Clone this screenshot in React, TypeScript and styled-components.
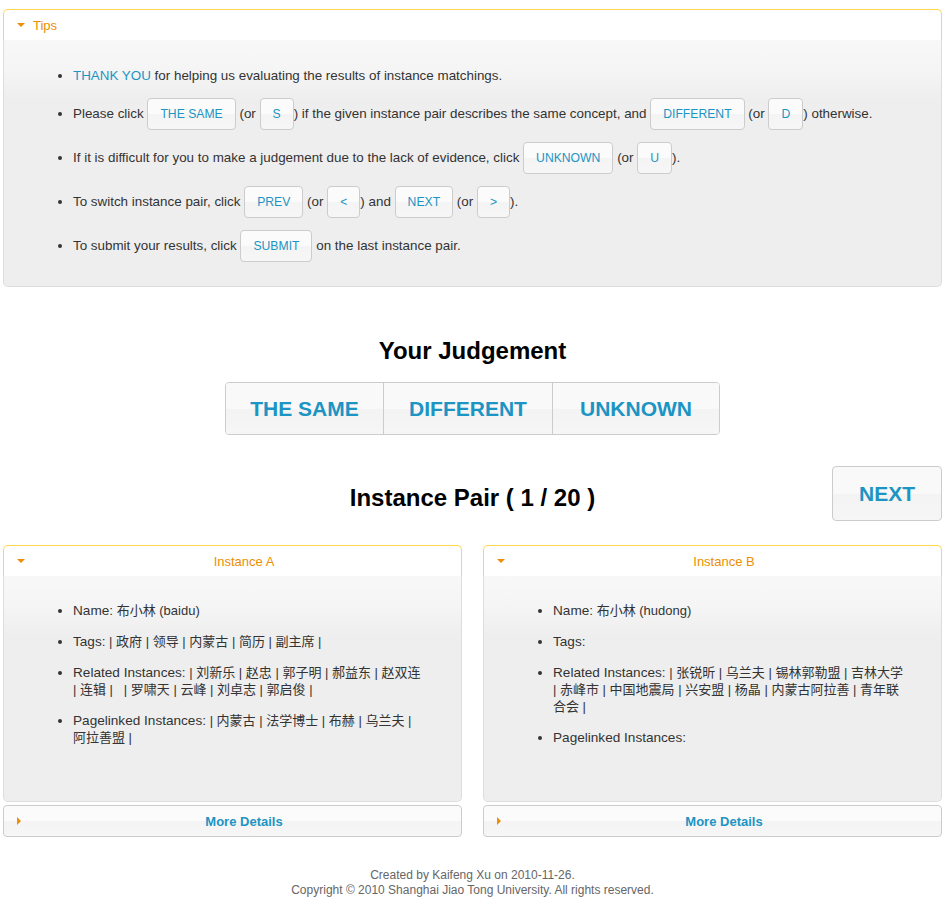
import React from 'react'
import styled, { createGlobalStyle } from 'styled-components'

const GlobalStyle = createGlobalStyle`
  body {
    margin: 0;
    background: #ffffff;
    font-family: "Trebuchet MS", "Liberation Sans", "Noto Sans CJK SC", sans-serif;
    font-size: 13px;
    color: #333333;
  }
`

const Page = styled.div`
  padding: 9px 2px 0 3px;
`

const Panel = styled.div`
  display: flex;
  flex-direction: column;
`

const PanelHeader = styled.div<{ $center?: boolean }>`
  position: relative;
  height: 30px;
  display: flex;
  align-items: center;
  justify-content: ${(p) => (p.$center ? 'center' : 'flex-start')};
  padding-left: ${(p) => (p.$center ? '23px' : '29px')};
  background: #ffffff;
  border: 1px solid #fbd850;
  border-bottom: none;
  border-radius: 5px 5px 0 0;
  color: #eb8f00;
  font-size: 13px;
`

const Arrow = styled.span<{ $dir: 'down' | 'right' }>`
  position: absolute;
  left: 13px;
  top: 50%;
  width: 0;
  height: 0;
  ${(p) =>
    p.$dir === 'down'
      ? `
    margin-top: -2px;
    border-left: 4px solid transparent;
    border-right: 4px solid transparent;
    border-top: 4px solid #ef8c08;
  `
      : `
    margin-top: -4px;
    border-top: 4px solid transparent;
    border-bottom: 4px solid transparent;
    border-left: 4px solid #ef8c08;
  `}
`

const PanelBody = styled.div`
  background: linear-gradient(#f8f8f8 0px, #f5f5f5 30px, #eeeeee 60px, #eeeeee 100%);
  border: 1px solid #dddddd;
  border-top: none;
  border-radius: 0 0 5px 5px;
`

const TipList = styled.ul`
  margin: 0;
  padding: 26px 0 24px 69px;
  list-style: disc;
  line-height: 20px;
  font-size: 13.4px;
  li {
    margin-bottom: 12px;
  }
  li:last-child {
    margin-bottom: 0;
  }
`

const Highlight = styled.span`
  color: #1c94c4;
`

const SmallBtn = styled.span`
  display: inline-flex;
  align-items: center;
  justify-content: center;
  vertical-align: middle;
  box-sizing: border-box;
  height: 32px;
  padding: 0 12px;
  background: linear-gradient(#fbfbfb 0%, #fbfbfb 50%, #f4f4f4 51%, #f6f6f6 100%);
  border: 1px solid #cccccc;
  border-radius: 4px;
  color: #1c94c4;
  font-size: 12.2px;
`

const Heading = styled.h2<{ $shift?: number }>`
  margin: ${(p) => p.$shift || 0}px 0 0;
  font-family: "Liberation Sans", Arial, sans-serif;
  font-weight: bold;
  font-size: 24px;
  line-height: 28px;
  color: #000000;
  text-align: center;
`

const JudgeSection = styled.div`
  margin-top: 50px;
  display: flex;
  flex-direction: column;
  align-items: center;
  gap: 17px;
`

const ButtonSet = styled.div`
  display: flex;
  border: 1px solid #cccccc;
  border-radius: 4px;
  overflow: hidden;
`

const BigBtn = styled.div<{ $w: number }>`
  width: ${(p) => p.$w}px;
  height: 51px;
  display: flex;
  align-items: center;
  justify-content: center;
  background: linear-gradient(#f9f9f9 0%, #f9f9f9 50%, #f3f3f3 51%, #f6f6f6 100%);
  color: #1c94c4;
  font-size: 21px;
  font-weight: bold;
  & + & {
    border-left: 1px solid #cccccc;
  }
`

const PairRow = styled.div`
  margin-top: 31px;
  display: grid;
  grid-template-columns: 1fr auto 1fr;
  align-items: center;
`

const NextBtn = styled.div`
  justify-self: end;
  box-sizing: border-box;
  width: 110px;
  height: 55px;
  display: flex;
  align-items: center;
  justify-content: center;
  background: linear-gradient(#f9f9f9 0%, #f9f9f9 50%, #f3f3f3 51%, #f6f6f6 100%);
  border: 1px solid #cccccc;
  border-radius: 4px;
  color: #1c94c4;
  font-size: 21px;
  font-weight: bold;
`

const Columns = styled.div`
  margin-top: 24px;
  display: grid;
  grid-template-columns: 1fr 1fr;
  column-gap: 21px;
`

const InstanceCol = styled.div`
  display: flex;
  flex-direction: column;
`

const InfoList = styled.ul`
  margin: 0;
  height: 225px;
  box-sizing: border-box;
  padding: 26px 36px 0 69px;
  list-style: disc;
  line-height: 17px;
  li {
    margin-bottom: 14px;
  }
`

const Label = styled.span`
  font-size: 13.6px;
`

const MoreBtn = styled.div`
  position: relative;
  margin-top: 3px;
  height: 30px;
  padding-left: 23px;
  display: flex;
  align-items: center;
  justify-content: center;
  background: linear-gradient(#fbfbfb 0%, #fbfbfb 50%, #f4f4f4 51%, #f6f6f6 100%);
  border: 1px solid #cccccc;
  border-radius: 4px;
  color: #1c94c4;
  font-weight: bold;
`

const Footer = styled.div`
  margin-top: 31px;
  padding-bottom: 14px;
  text-align: center;
  font-family: "Liberation Sans", Arial, sans-serif;
  font-size: 12px;
  line-height: 15px;
  color: #666666;
`

// empty entries keep their slot, as the source data shows "|  |"
const joinLinks = (items: string[]) =>
  items.length ? ' | ' + items.map((t) => t || '\u00a0').join(' | ') + ' |' : ''

const instances = [
  {
    title: 'Instance A',
    name: '布小林 (baidu)',
    tags: ['政府', '领导', '内蒙古', '简历', '副主席'],
    related: ['刘新乐', '赵忠', '郭子明', '郝益东', '赵双连', '连辑', '', '罗啸天', '云峰', '刘卓志', '郭启俊'],
    paged: ['内蒙古', '法学博士', '布赫', '乌兰夫', '阿拉善盟'],
  },
  {
    title: 'Instance B',
    name: '布小林 (hudong)',
    tags: [],
    related: ['张锐昕', '乌兰夫', '锡林郭勒盟', '吉林大学', '赤峰市', '中国地震局', '兴安盟', '杨晶', '内蒙古阿拉善', '青年联合会'],
    paged: [],
  },
]

export default function App() {
  return (
    <Page>
      <GlobalStyle />
      <Panel>
        <PanelHeader>
          <Arrow $dir="down" />
          Tips
        </PanelHeader>
        <PanelBody>
          <TipList>
            <li>
              <Highlight>THANK YOU</Highlight> for helping us evaluating the results of instance matchings.
            </li>
            <li>
              Please click <SmallBtn>THE SAME</SmallBtn> (or <SmallBtn>S</SmallBtn>) if the given instance pair describes
              the same concept, and <SmallBtn>DIFFERENT</SmallBtn> (or <SmallBtn>D</SmallBtn>) otherwise.
            </li>
            <li>
              If it is difficult for you to make a judgement due to the lack of evidence, click{' '}
              <SmallBtn>UNKNOWN</SmallBtn> (or <SmallBtn>U</SmallBtn>).
            </li>
            <li>
              To switch instance pair, click <SmallBtn>PREV</SmallBtn> (or <SmallBtn>&lt;</SmallBtn>) and{' '}
              <SmallBtn>NEXT</SmallBtn> (or <SmallBtn>&gt;</SmallBtn>).
            </li>
            <li>
              To submit your results, click <SmallBtn>SUBMIT</SmallBtn> on the last instance pair.
            </li>
          </TipList>
        </PanelBody>
      </Panel>

      <JudgeSection>
        <Heading>Your Judgement</Heading>
        <ButtonSet>
          <BigBtn $w={157}>THE SAME</BigBtn>
          <BigBtn $w={168}>DIFFERENT</BigBtn>
          <BigBtn $w={166}>UNKNOWN</BigBtn>
        </ButtonSet>
      </JudgeSection>

      <PairRow>
        <div />
        <Heading $shift={8}>Instance Pair ( 1 / 20 )</Heading>
        <NextBtn>NEXT</NextBtn>
      </PairRow>

      <Columns>
        {instances.map((ins) => (
          <InstanceCol key={ins.title}>
            <Panel>
              <PanelHeader $center>
                <Arrow $dir="down" />
                {ins.title}
              </PanelHeader>
              <PanelBody>
                <InfoList>
                  <li>
                    <Label>Name:</Label> {ins.name}
                  </li>
                  <li>
                    <Label>Tags:</Label>
                    {joinLinks(ins.tags)}
                  </li>
                  <li>
                    <Label>Related Instances:</Label>
                    {joinLinks(ins.related)}
                  </li>
                  <li>
                    <Label>Pagelinked Instances:</Label>
                    {joinLinks(ins.paged)}
                  </li>
                </InfoList>
              </PanelBody>
            </Panel>
            <MoreBtn>
              <Arrow $dir="right" />
              More Details
            </MoreBtn>
          </InstanceCol>
        ))}
      </Columns>

      <Footer>
        Created by Kaifeng Xu on 2010-11-26.
        <br />
        Copyright © 2010 Shanghai Jiao Tong University. All rights reserved.
      </Footer>
    </Page>
  )
}
